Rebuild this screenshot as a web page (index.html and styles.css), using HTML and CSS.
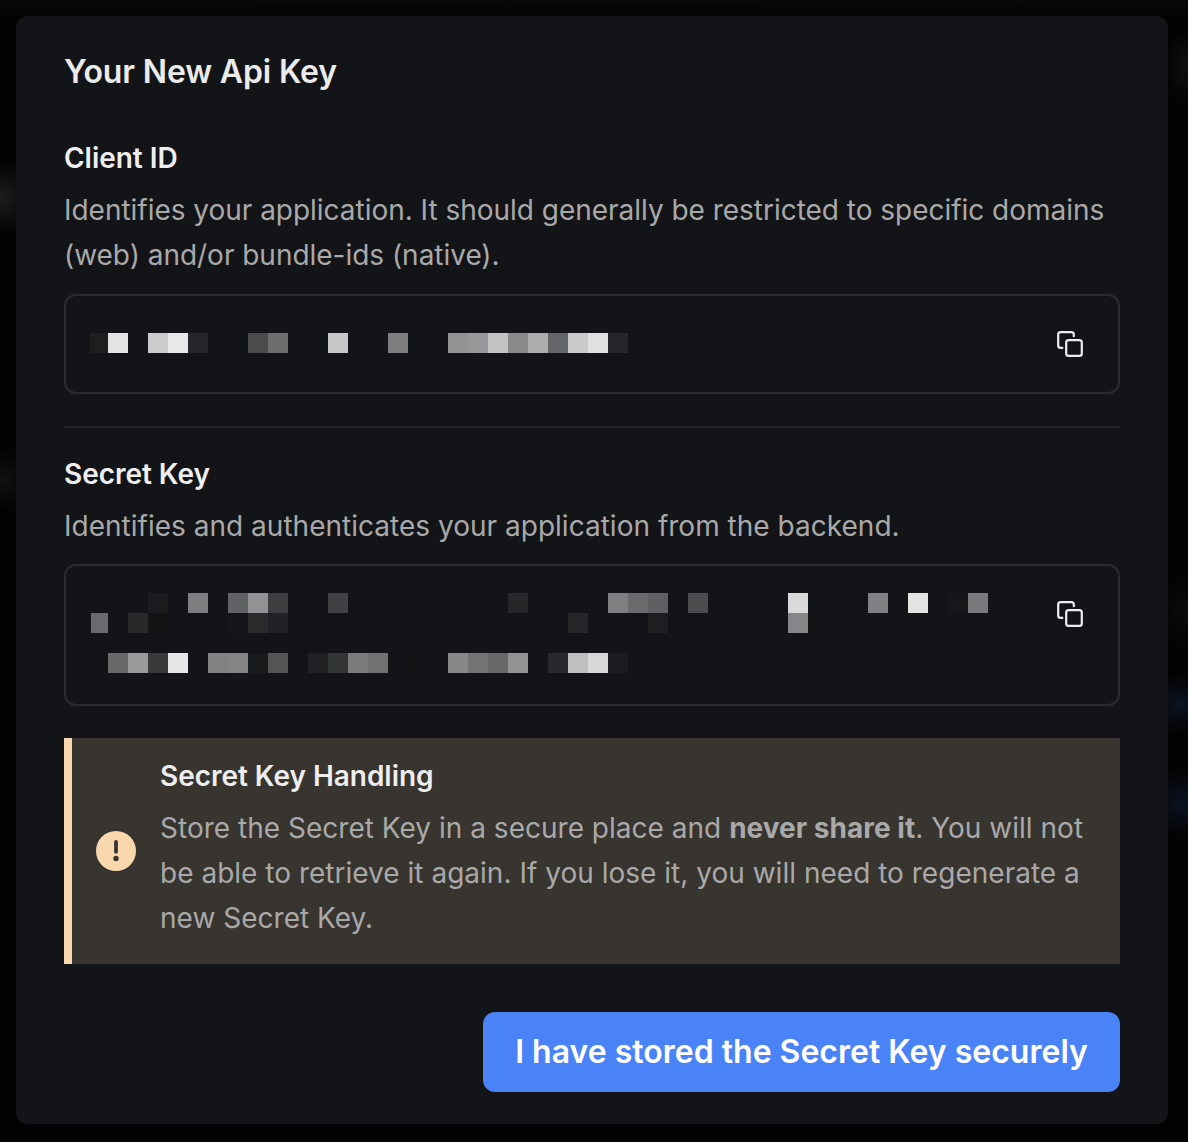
FILE: index.html
```html
<!DOCTYPE html>
<html lang="en">
<head>
<meta charset="utf-8">
<title>Your New Api Key</title>
<link rel="stylesheet" href="styles.css">
</head>
<body>
<main class="dialog">
  <h1 class="title">Your New Api Key</h1>

  <section class="field">
    <h2 class="label">Client ID</h2>
    <p class="text text-tight">Identifies your application. It should generally be restricted to specific domains (web) and/or bundle-ids (native).</p>
    <div class="keybox">
      <svg class="mosaic" width="920" height="96" shape-rendering="crispEdges" aria-label="Hidden client ID">
        <g transform="translate(0 37)">
          <rect x="2" width="18" height="20" fill="#1d1e1f"/><rect x="20" width="20" height="20" fill="#e3e3e3"/>
          <rect x="60" width="20" height="20" fill="#cbcbcb"/><rect x="80" width="20" height="20" fill="#e8e8e8"/><rect x="100" width="20" height="20" fill="#242529"/>
          <rect x="160" width="20" height="20" fill="#4b4b4b"/><rect x="180" width="20" height="20" fill="#6c6d6f"/>
          <rect x="240" width="20" height="20" fill="#c8c8c8"/><rect x="300" width="20" height="20" fill="#7d7d7d"/>
          <rect x="360" width="20" height="20" fill="#939393"/><rect x="380" width="20" height="20" fill="#98989a"/><rect x="400" width="20" height="20" fill="#c3c3c3"/><rect x="420" width="20" height="20" fill="#8a8a8a"/><rect x="440" width="20" height="20" fill="#abadac"/><rect x="460" width="20" height="20" fill="#646569"/><rect x="480" width="20" height="20" fill="#c9c9c9"/><rect x="500" width="20" height="20" fill="#e0e0e0"/><rect x="520" width="20" height="20" fill="#242528"/>
        </g>
      </svg>
      <button class="copy" aria-label="Copy client ID">
        <svg width="32" height="32" viewBox="0 0 32 32" fill="none" stroke="currentColor" stroke-width="2.2" stroke-linecap="round" stroke-linejoin="round"><rect x="12.2" y="12.2" width="15.6" height="15.6" rx="2.4"/><path d="M8.4 19.8H6.6a2.4 2.4 0 0 1-2.4-2.4V6.6a2.4 2.4 0 0 1 2.4-2.4h10.8a2.4 2.4 0 0 1 2.4 2.4v1.6"/></svg>
      </button>
    </div>
  </section>

  <hr class="divider">

  <section class="field">
    <h2 class="label">Secret Key</h2>
    <p class="text">Identifies and authenticates your application from the backend.</p>
    <div class="keybox">
      <svg class="mosaic" width="920" height="138" shape-rendering="crispEdges" aria-label="Hidden secret key">
        <g transform="translate(0 27)">
          <rect x="60" width="20" height="20" fill="#1b1c1d"/><rect x="100" width="20" height="20" fill="#7d7e80"/>
          <rect x="140" width="20" height="20" fill="#606163"/><rect x="160" width="20" height="20" fill="#929294"/><rect x="180" width="20" height="20" fill="#3e3e40"/>
          <rect x="240" width="20" height="20" fill="#404143"/><rect x="420" width="20" height="20" fill="#262729"/>
          <rect x="520" width="20" height="20" fill="#7e7f81"/><rect x="540" width="20" height="20" fill="#6a6b6d"/><rect x="560" width="20" height="20" fill="#5f6062"/>
          <rect x="600" width="20" height="20" fill="#4b4c4e"/><rect x="700" width="20" height="20" fill="#dadada"/>
          <rect x="780" width="20" height="20" fill="#808183"/><rect x="820" width="20" height="20" fill="#e4e4e4"/>
          <rect x="860" width="20" height="20" fill="#161718"/><rect x="880" width="20" height="20" fill="#78797b"/>
        </g>
        <g transform="translate(0 47)">
          <rect x="3" width="17" height="20" fill="#6a6b6d"/><rect x="40" width="20" height="20" fill="#27282a"/><rect x="60" width="20" height="20" fill="#131415"/>
          <rect x="140" width="20" height="20" fill="#151619"/><rect x="160" width="20" height="20" fill="#2a2b2d"/><rect x="180" width="20" height="20" fill="#212227"/>
          <rect x="480" width="20" height="20" fill="#252628"/><rect x="560" width="20" height="20" fill="#1d1e20"/>
          <rect x="700" width="20" height="20" fill="#858688"/><rect x="720" width="20" height="20" fill="#131415"/>
        </g>
        <g transform="translate(0 87)">
          <rect x="20" width="20" height="20" fill="#696969"/><rect x="40" width="20" height="20" fill="#999a9c"/><rect x="60" width="20" height="20" fill="#3a3a3a"/><rect x="80" width="20" height="20" fill="#e7e7e7"/>
          <rect x="120" width="20" height="20" fill="#828282"/><rect x="140" width="20" height="20" fill="#848484"/><rect x="160" width="20" height="20" fill="#191a1b"/><rect x="180" width="20" height="20" fill="#555557"/>
          <rect x="220" width="20" height="20" fill="#212123"/><rect x="240" width="20" height="20" fill="#343537"/><rect x="260" width="20" height="20" fill="#7b7b7b"/><rect x="280" width="20" height="20" fill="#727272"/>
          <rect x="320" width="20" height="20" fill="#131415"/>
          <rect x="360" width="20" height="20" fill="#888888"/><rect x="380" width="20" height="20" fill="#747474"/><rect x="400" width="20" height="20" fill="#686868"/><rect x="420" width="20" height="20" fill="#939393"/>
          <rect x="460" width="20" height="20" fill="#29292b"/><rect x="480" width="20" height="20" fill="#bfbfbf"/><rect x="500" width="20" height="20" fill="#d7d7d7"/><rect x="520" width="20" height="20" fill="#1b1c1f"/>
        </g>
      </svg>
      <button class="copy" aria-label="Copy secret key">
        <svg width="32" height="32" viewBox="0 0 32 32" fill="none" stroke="currentColor" stroke-width="2.2" stroke-linecap="round" stroke-linejoin="round"><rect x="12.2" y="12.2" width="15.6" height="15.6" rx="2.4"/><path d="M8.4 19.8H6.6a2.4 2.4 0 0 1-2.4-2.4V6.6a2.4 2.4 0 0 1 2.4-2.4h10.8a2.4 2.4 0 0 1 2.4 2.4v1.6"/></svg>
      </button>
    </div>
  </section>

  <aside class="warning">
    <svg class="warning-icon" width="40" height="40" viewBox="0 0 40 40"><circle cx="20" cy="20" r="20" fill="#f9d8ae"/><path d="M20 11v9.8" stroke="#38342f" stroke-width="3.8" stroke-linecap="round"/><circle cx="20" cy="27.5" r="2.7" fill="#38342f"/></svg>
    <div class="warning-body">
      <h2 class="label">Secret Key Handling</h2>
      <p class="text">Store the Secret Key in a secure place and <strong>never share it</strong>. You will not be able to retrieve it again. If you lose it, you will need to regenerate a new Secret Key.</p>
    </div>
  </aside>

  <button class="confirm">I have stored the Secret Key securely</button>
</main>
</body>
</html>
```
FILE: styles.css
```css
* { box-sizing: border-box; }
body {
  margin: 0;
  padding: 16px 20px 18px 16px;
  height: 1142px;
  font-family: Inter, "Liberation Sans", sans-serif;
  background:
    radial-gradient(ellipse 40px 36px at 0 198px, #1d1d1d, transparent),
    radial-gradient(ellipse 34px 30px at 0 480px, #111112, transparent),
    radial-gradient(ellipse 26px 36px at 1188px 65px, #111111, transparent),
    radial-gradient(ellipse 26px 34px at 1186px 612px, #0b0b0c, transparent),
    radial-gradient(ellipse 40px 30px at 1182px 704px, #0b1222, transparent),
    radial-gradient(ellipse 40px 34px at 1182px 802px, #0b1222, transparent),
    linear-gradient(#08080a, #030303 16px, #030303);
}
h1, h2, p { margin: 0; }
button { border: 0; padding: 0; font: inherit; }
.dialog {
  display: flex;
  flex-direction: column;
  height: 1108px;
  padding: 32px 48px;
  border-radius: 12px;
  background: #131418;
}
.title {
  margin-bottom: 40px;
  font-size: 32px;
  line-height: 48px;
  font-weight: 600;
  letter-spacing: -0.15px;
  color: #ebebeb;
}
.field { display: flex; flex-direction: column; }
.label {
  margin-bottom: 8px;
  font-size: 28px;
  line-height: 44px;
  font-weight: 600;
  letter-spacing: -0.03px;
  color: #eeeeee;
}
.text {
  font-size: 28px;
  line-height: 45px;
  letter-spacing: 0.015px;
  color: #a9a9a9;
}
.text-tight { letter-spacing: -0.025px; }
.keybox {
  display: flex;
  align-items: flex-start;
  justify-content: space-between;
  margin-top: 16px;
  padding: 0 32px 0 22px;
  border: 2px solid #2a2b2e;
  border-radius: 12px;
}
.mosaic { display: block; }
.copy {
  display: flex;
  margin-top: 32px;
  background: none;
  color: #eeeeee;
}
.divider {
  width: 100%;
  height: 2px;
  margin: 32px 0 24px;
  border: 0;
  background: #222327;
}
.field + .divider + .field .keybox { margin-top: 15px; }
.warning {
  display: flex;
  align-items: center;
  gap: 24px;
  height: 226px;
  margin-top: 32px;
  padding: 0 24px;
  border-left: 8px solid #f9d8ae;
  background: #38342f;
}
.warning-icon { flex: none; }
.warning-body { flex: 1; margin-top: -8px; }
.confirm {
  align-self: flex-end;
  width: 637px;
  height: 80px;
  margin-top: 48px;
  padding-bottom: 1px;
  border-radius: 12px;
  background: #4a83f8;
  color: #ffffff;
  font-size: 32px;
  font-weight: 600;
}
```
